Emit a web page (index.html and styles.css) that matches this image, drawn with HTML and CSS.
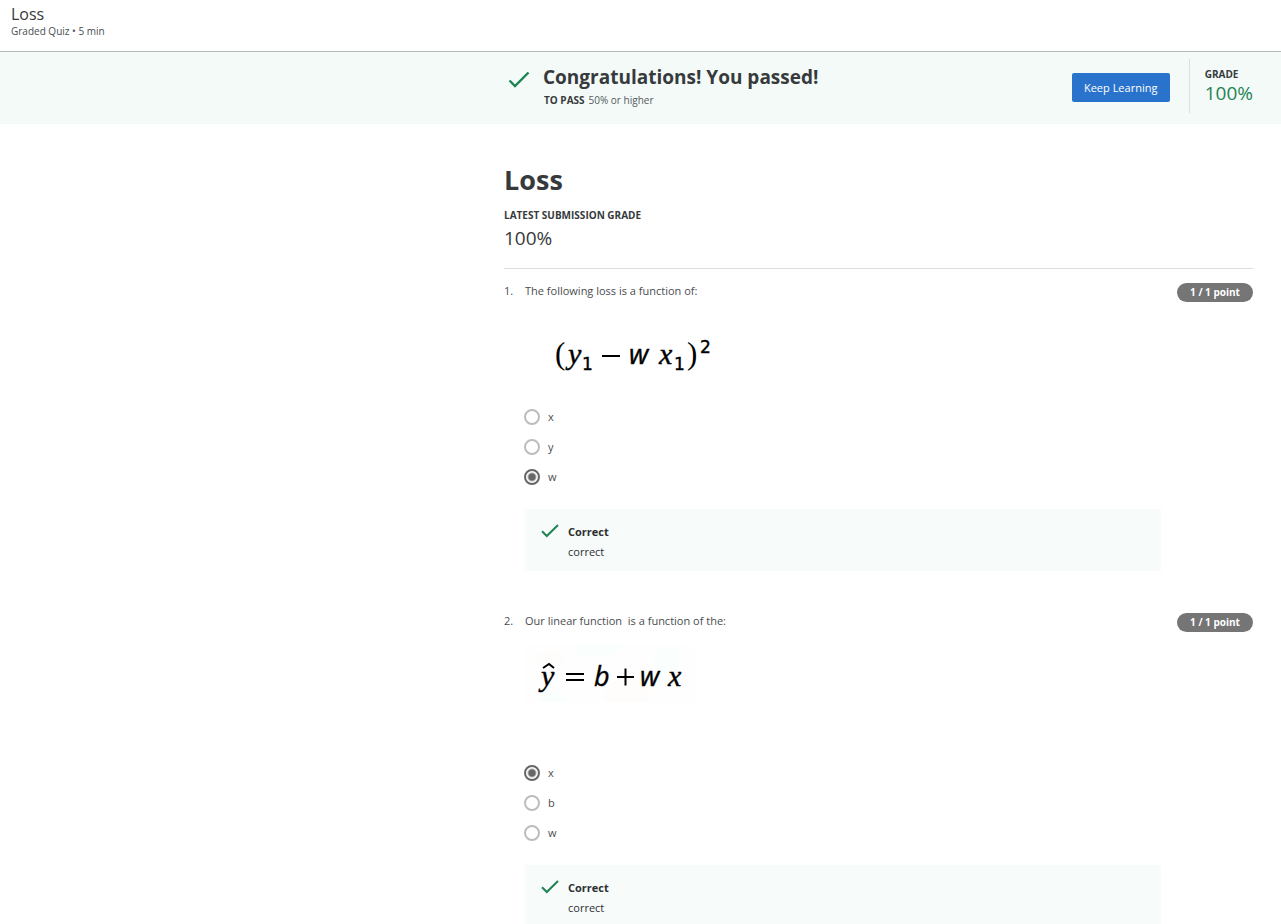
FILE: index.html
```html
<!DOCTYPE html>
<html lang="en">
<head>
<meta charset="utf-8">
<title>Loss</title>
<link rel="stylesheet" href="styles.css">
</head>
<body>
<header class="topbar">
  <div class="topbar-title">Loss</div>
  <div class="topbar-meta">Graded Quiz • 5 min</div>
</header>
<section class="banner">
  <svg class="banner-check" viewBox="0 0 22 18" aria-hidden="true"><path d="M1.5 9.5L7 15L20.5 1.5"/></svg>
  <div class="banner-text">
    <h2 class="banner-title">Congratulations! You passed!</h2>
    <div class="banner-pass"><strong class="label">TO PASS</strong><span>50% or higher</span></div>
  </div>
  <button class="keep" type="button">Keep Learning</button>
  <div class="banner-grade">
    <strong class="label">GRADE</strong>
    <span class="score score-green">100%</span>
  </div>
</section>
<main class="content">
  <div class="summary">
    <h1 class="title">Loss</h1>
    <strong class="label">LATEST SUBMISSION GRADE</strong>
    <span class="score">100%</span>
  </div>
  <section class="question">
    <span class="number">1.</span>
    <div class="question-body">
      <p class="prompt" id="q1">The following loss is a function of:</p>
      <svg class="formula" viewBox="0 0 200 72" role="img" aria-label="Squared loss">
        <g class="symbols">
          <text class="paren" x="30" y="37">(</text>
          <text class="curly" x="43" y="37">y</text>
          <text class="small" x="57" y="43">1</text>
          <path d="M77 29h18"/>
          <text x="104" y="37">w</text>
          <text class="curly" x="134" y="37">x</text>
          <text class="small" x="149" y="43">1</text>
          <text class="paren" x="162" y="37">)</text>
          <text class="small" x="175" y="26">2</text>
        </g>
      </svg>
      <div class="options" role="radiogroup" aria-labelledby="q1">
        <label class="option"><input class="radio" type="radio" name="q1">x</label>
        <label class="option"><input class="radio" type="radio" name="q1">y</label>
        <label class="option"><input class="radio" type="radio" name="q1" checked>w</label>
      </div>
      <div class="feedback">
        <svg class="feedback-check" viewBox="0 0 18 14" aria-hidden="true"><path d="M1 7.2L5.8 12L17 1"/></svg>
        <div><strong>Correct</strong><p class="feedback-note">correct</p></div>
      </div>
    </div>
    <span class="points">1 / 1 point</span>
  </section>
  <section class="question">
    <span class="number">2.</span>
    <div class="question-body">
      <p class="prompt" id="q2">Our linear function &nbsp;is a function of the:</p>
      <svg class="formula formula-tall" viewBox="0 0 200 98" role="img" aria-label="Linear function">
        <g class="tint">
          <path class="tint-gray" d="M0 0H170V57H0Z"/>
          <path class="tint-green" d="M48 0H98Q92 10 69 12Q50 10 48 0ZM128 7Q142 0 154 7V22L145 28L128 24ZM14 51Q28 38 42 51V57H14Z"/>
          <path class="tint-red" d="M80 40Q104 30 124 40V57H80ZM12 8L36 6L40 18L26 24L12 20Z"/>
        </g>
        <g class="symbols">
          <text class="curly" x="16" y="41">y</text>
          <path d="M18 23L24 19L29 23M41 29h18M41 35h18M92 32h17M100.500 23.500v17"/>
          <text x="69" y="41">b</text>
          <text x="115" y="41">w</text>
          <text class="curly" x="143" y="41">x</text>
        </g>
      </svg>
      <div class="options" role="radiogroup" aria-labelledby="q2">
        <label class="option"><input class="radio" type="radio" name="q2" checked>x</label>
        <label class="option"><input class="radio" type="radio" name="q2">b</label>
        <label class="option"><input class="radio" type="radio" name="q2">w</label>
      </div>
      <div class="feedback">
        <svg class="feedback-check" viewBox="0 0 18 14" aria-hidden="true"><path d="M1 7.2L5.8 12L17 1"/></svg>
        <div><strong>Correct</strong><p class="feedback-note">correct</p></div>
      </div>
    </div>
    <span class="points">1 / 1 point</span>
  </section>
</main>
</body>
</html>
```
FILE: styles.css
```css
* { box-sizing: border-box; }
body {
  margin: 0;
  background: #fff;
  color: #373a3c;
  font-family: "Open Sans", sans-serif;
  font-size: 11px;
  line-height: 20px;
}
h1, h2, p { margin: 0; }
.topbar {
  height: 52px;
  padding: 4px 11px 0;
  border-bottom: 1px solid #b4bab8;
}
.topbar-title { font-size: 16px; line-height: 20px; }
.topbar-meta { font-size: 10px; line-height: 15px; color: #4a4d4f; }
.banner {
  display: flex;
  align-items: flex-start;
  padding: 7px 28px 11px 508px;
  background: #f3faf8;
}
.banner-check { width: 22px; height: 18px; margin-top: 12px; fill: none; stroke: #1f8354; stroke-width: 2.4; }
.banner-text { flex: 1; padding: 6px 0 0 13px; }
.banner-title { font-size: 19px; line-height: 24px; font-weight: 700; }
.banner-pass { display: flex; gap: 4px; margin: 4px 0 0 1px; font-size: 10px; line-height: 15px; color: #55595b; }
.label { display: block; font-size: 10px; line-height: 15px; font-weight: 700; color: #373a3c; }
.keep {
  width: 98px;
  height: 29px;
  margin: 14px 19px 0 0;
  padding: 0;
  border: 0;
  border-radius: 2px;
  background: #2a73cc;
  color: #fff;
  font: 500 11px "Open Sans", sans-serif;
}
.banner-grade { height: 54px; padding: 8px 0 0 15px; border-left: 1px solid #dbe0df; }
.score { display: block; font-size: 19px; line-height: 22px; }
.score-green { color: #1f8354; }
.content { padding: 36px 28px 0 504px; }
.summary { padding-bottom: 19px; border-bottom: 1px solid #dcdedd; }
.title { margin-bottom: 8px; font-size: 27px; line-height: 40px; font-weight: 700; }
.summary .score { margin-top: 4px; }
.question { display: flex; align-items: flex-start; padding-top: 12px; margin-bottom: 28px; color: #4a4d4f; }
.number { width: 21px; }
.question-body { flex: 1; }
.points {
  width: 76px;
  height: 19px;
  margin: 2px 0 0 16px;
  border-radius: 10px;
  background: #757575;
  color: #fff;
  font-size: 10px;
  font-weight: 700;
  line-height: 19px;
  text-align: center;
}
.formula { display: block; width: 200px; height: 72px; margin: 26px 0 8px; }
.formula-tall { height: 98px; margin: 14px 0 20px; }
.symbols { fill: #000; stroke: #000; stroke-width: 0.4; font: italic 400 27px "Open Sans", sans-serif; }
.symbols path { fill: none; stroke-width: 2; }
.symbols .small { font: 17px "DejaVu Sans", sans-serif; }
.symbols .paren { font: 31px "Liberation Serif", serif; stroke: none; }
.symbols .curly { font: italic 30px "Liberation Serif", serif; }
.tint-gray { fill: #fefefe; }
.tint-green { fill: #fafefc; }
.tint-red { fill: #fffdfc; }
.options { display: grid; gap: 10px; }
.option { display: flex; align-items: center; gap: 8px; }
.radio {
  appearance: none;
  width: 16px;
  height: 16px;
  margin: 0 0 0 -1px;
  border: 2px solid #bdbdbd;
  border-radius: 50%;
  background: #fff;
}
.radio:checked { border-color: #666; background: radial-gradient(circle, #666 3px, #fff 5px); }
.feedback { display: flex; gap: 9px; margin-top: 22px; padding: 13px 16px 9px; background: #f7fbfa; color: #2d3032; }
.feedback-check { width: 18px; height: 14px; margin-top: 2px; fill: none; stroke: #1f8354; stroke-width: 2; }
```
